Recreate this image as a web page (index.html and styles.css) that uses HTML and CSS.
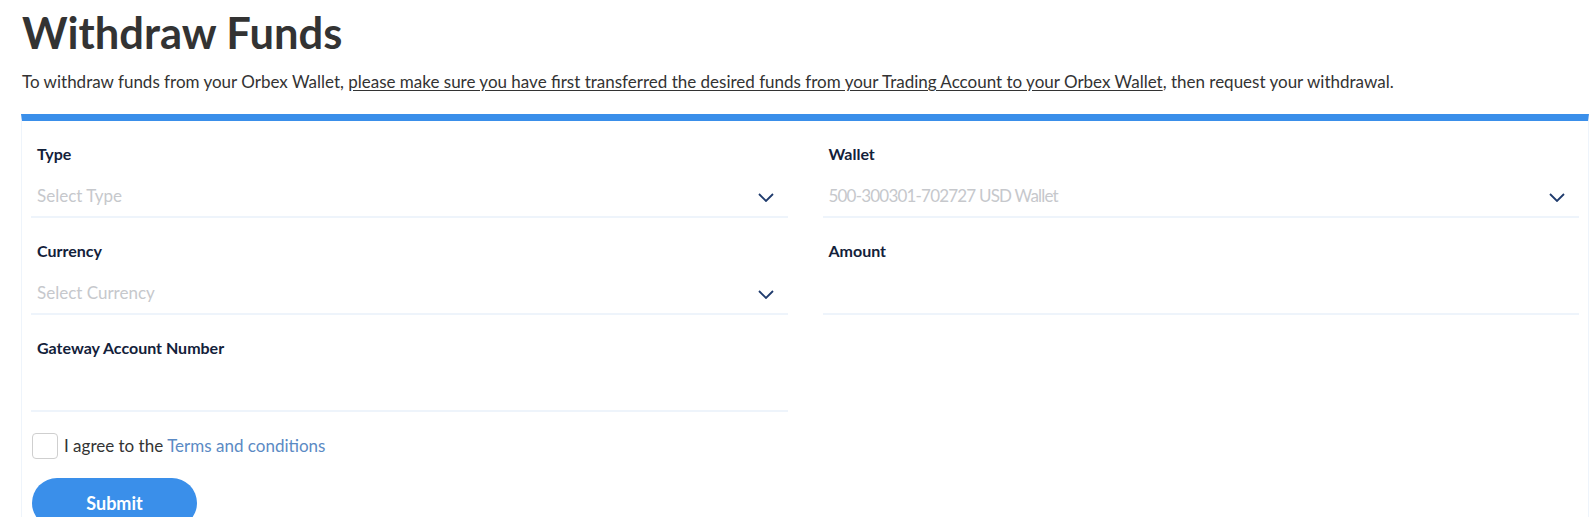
FILE: index.html
```html
<!DOCTYPE html>
<html lang="en">
<head>
<meta charset="utf-8">
<title>Withdraw Funds</title>
<link rel="stylesheet" href="styles.css">
</head>
<body>
<main class="page">
  <h1 class="title">Withdraw Funds</h1>
  <p class="intro">To withdraw funds from your Orbex Wallet, <span class="intro-link">please make sure you have first transferred the desired funds from your Trading Account to your Orbex Wallet</span>, then request your withdrawal.</p>

  <section class="card">
    <div class="grid">
      <div class="field">
        <div class="label">Type</div>
        <div class="control">
          <span class="placeholder">Select Type</span>
          <svg class="chevron" width="16" height="9" viewBox="0 0 16 9"><polyline points="1,1 8,8 15,1" fill="none" stroke="#1f3b6d" stroke-width="1.8"/></svg>
        </div>
      </div>
      <div class="field">
        <div class="label">Wallet</div>
        <div class="control">
          <span class="placeholder numeric">500-300301-702727 USD Wallet</span>
          <svg class="chevron" width="16" height="9" viewBox="0 0 16 9"><polyline points="1,1 8,8 15,1" fill="none" stroke="#1f3b6d" stroke-width="1.8"/></svg>
        </div>
      </div>
      <div class="field">
        <div class="label">Currency</div>
        <div class="control">
          <span class="placeholder">Select Currency</span>
          <svg class="chevron" width="16" height="9" viewBox="0 0 16 9"><polyline points="1,1 8,8 15,1" fill="none" stroke="#1f3b6d" stroke-width="1.8"/></svg>
        </div>
      </div>
      <div class="field">
        <div class="label">Amount</div>
        <div class="control"></div>
      </div>
      <div class="field">
        <div class="label">Gateway Account Number</div>
        <div class="control"></div>
      </div>
    </div>

    <label class="agree">
      <span class="checkbox"></span>
      <span class="agree-text">I agree to the</span>
      <a class="terms" href="#">Terms and conditions</a>
    </label>

    <button class="submit" type="button">Submit</button>
  </section>
</main>
</body>
</html>
```

FILE: styles.css
```css
html, body {
  margin: 0;
  padding: 0;
  background: #ffffff;
}

body {
  font-family: Lato, "Open Sans", sans-serif;
  color: #333333;
  overflow: hidden;
}

.page {
  padding: 8px 2px 0 21px;
}

.title {
  margin: 0;
  font-size: 43.5px;
  line-height: 48px;
  font-weight: 700;
  color: #333333;
  padding-left: 1px;
}

.intro {
  margin: 14px 0 0 1px;
  font-size: 17px;
  line-height: 24px;
  color: #333333;
}

.intro-link {
  text-decoration: underline;
  text-underline-offset: 2px;
}

.card {
  margin-top: 20px;
  border: 1px solid #eef4fb;
  border-top: 7px solid #3a8fea;
  padding: 0 9px 20px 9px;
}

.grid {
  display: grid;
  grid-template-columns: 1fr 1fr;
  column-gap: 35px;
}

.field {
  padding-top: 23px;
}

.label {
  font-size: 16px;
  line-height: 20px;
  font-weight: 700;
  color: #13213a;
  padding-left: 6px;
  margin-bottom: 12px;
}

.control {
  height: 40px;
  border-bottom: 2px solid #eef4fb;
  display: flex;
  align-items: center;
  justify-content: space-between;
  padding: 0 14px 0 6px;
}

.placeholder {
  font-size: 17px;
  line-height: 40px;
  color: #c6c8cc;
}

.numeric {
  letter-spacing: -0.8px;
}

.chevron {
  display: block;
  margin-top: 2px;
}

.agree {
  display: flex;
  align-items: center;
  margin-top: 21px;
  font-size: 17px;
  line-height: 26px;
  padding-left: 1px;
}

.checkbox {
  width: 24px;
  height: 24px;
  border: 1px solid #cfcfcf;
  border-radius: 4px;
  background: #fff;
}

.agree-text {
  margin-left: 6px;
  color: #333333;
}

.terms {
  margin-left: 4px;
  color: #5b8ac4;
  text-decoration: none;
}

.submit {
  margin-top: 19px;
  margin-left: 1px;
  width: 165px;
  height: 50px;
  border: none;
  border-radius: 25px;
  background: #3a8fea;
  color: #ffffff;
  font-family: Lato, "Open Sans", sans-serif;
  font-size: 18px;
  font-weight: 700;
  padding: 0;
}
```
